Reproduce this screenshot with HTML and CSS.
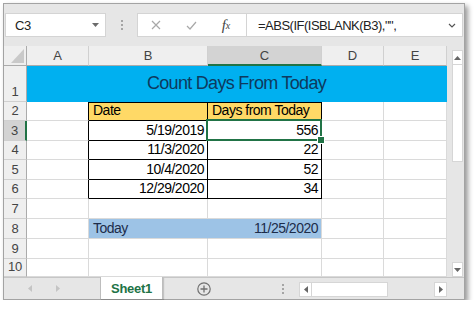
FILE: index.html
```html
<!DOCTYPE html>
<html lang="en">
<head>
    <meta charset="UTF-8">
    <meta name="viewport" content="width=device-width, initial-scale=1.0">
    <title>Count Days From Today</title>
    <link rel="stylesheet" href="styles.css">
</head>
<body>

<div class="window">

    <!-- Name box + formula bar -->
    <div class="formula-bar">
        <div class="name-box">
            <span>C3</span>
            <svg width="7" height="4" viewBox="0 0 7 4"><path d="M0 0h7L3.5 4z" fill="#6b6b6b"/></svg>
        </div>
        <div class="grip"><i></i><i></i><i></i></div>
        <div class="fx-box">
            <span class="btn">
                <svg width="10" height="10" viewBox="0 0 10 10"><path d="M1 1l8 8M9 1l-8 8" stroke="#a8a8a8" stroke-width="1.2" fill="none"/></svg>
            </span>
            <span class="btn">
                <svg width="11" height="9" viewBox="0 0 11 9"><path d="M1 5l3 3 6-7" stroke="#a8a8a8" stroke-width="1.2" fill="none"/></svg>
            </span>
            <span class="btn fx">f<sub>x</sub></span>
        </div>
        <div class="formula">
            <span>=ABS(IF(ISBLANK(B3),"",</span>
            <svg width="8" height="5" viewBox="0 0 8 5"><path d="M1 1l3 3 3-3" stroke="#555" stroke-width="1.2" fill="none"/></svg>
        </div>
    </div>

    <!-- Worksheet -->
    <div class="sheet">
        <div class="grid">
            <!-- column headers -->
            <div class="cell corner">
                <svg width="13" height="14" viewBox="0 0 13 14"><path d="M13 0v14H0z" fill="#c9c9c9"/></svg>
            </div>
            <div class="cell col">A</div>
            <div class="cell col">B</div>
            <div class="cell col sel">C</div>
            <div class="cell col">D</div>
            <div class="cell col">E</div>

            <!-- row 1 -->
            <div class="cell row">1</div>
            <div class="cell title">Count Days From Today</div>

            <!-- row 2 -->
            <div class="cell row">2</div>
            <div class="cell edge"></div>
            <div class="cell t hd">Date</div>
            <div class="cell t hd">Days from Today</div>
            <div class="cell"></div>
            <div class="cell"></div>

            <!-- row 3 -->
            <div class="cell row sel">3</div>
            <div class="cell edge"></div>
            <div class="cell t num">5/19/2019</div>
            <div class="cell t num active">556</div>
            <div class="cell"></div>
            <div class="cell"></div>

            <!-- row 4 -->
            <div class="cell row">4</div>
            <div class="cell edge"></div>
            <div class="cell t num">11/3/2020</div>
            <div class="cell t num">22</div>
            <div class="cell"></div>
            <div class="cell"></div>

            <!-- row 5 -->
            <div class="cell row">5</div>
            <div class="cell edge"></div>
            <div class="cell t num">10/4/2020</div>
            <div class="cell t num">52</div>
            <div class="cell"></div>
            <div class="cell"></div>

            <!-- row 6 -->
            <div class="cell row">6</div>
            <div class="cell edge"></div>
            <div class="cell t num">12/29/2020</div>
            <div class="cell t num">34</div>
            <div class="cell"></div>
            <div class="cell"></div>

            <!-- row 7 -->
            <div class="cell row">7</div>
            <div class="cell"></div>
            <div class="cell"></div>
            <div class="cell"></div>
            <div class="cell"></div>
            <div class="cell"></div>

            <!-- row 8 -->
            <div class="cell row">8</div>
            <div class="cell"></div>
            <div class="cell today">Today</div>
            <div class="cell today num">11/25/2020</div>
            <div class="cell"></div>
            <div class="cell"></div>

            <!-- row 9 -->
            <div class="cell row">9</div>
            <div class="cell"></div>
            <div class="cell"></div>
            <div class="cell"></div>
            <div class="cell"></div>
            <div class="cell"></div>

            <!-- row 10 -->
            <div class="cell row">10</div>
            <div class="cell"></div>
            <div class="cell"></div>
            <div class="cell"></div>
            <div class="cell"></div>
            <div class="cell"></div>
        </div>

        <div class="vscroll">
            <div class="arrow-box">
                <svg width="7" height="4" viewBox="0 0 7 4"><path d="M0 4h7L3.5 0z" fill="#666"/></svg>
            </div>
            <div class="thumb"></div>
            <div class="track"></div>
            <div class="arrow-box">
                <svg width="7" height="4" viewBox="0 0 7 4"><path d="M0 0h7L3.5 4z" fill="#666"/></svg>
            </div>
        </div>
    </div>

    <!-- Sheet tabs + horizontal scroll -->
    <div class="tabs">
        <div class="nav">
            <svg width="4" height="7" viewBox="0 0 4 7"><path d="M4 0v7L0 3.5z" fill="#c4c4c4"/></svg>
            <svg width="4" height="7" viewBox="0 0 4 7"><path d="M0 0v7l4-3.5z" fill="#c4c4c4"/></svg>
        </div>
        <div class="tab">Sheet1</div>
        <div class="add">
            <svg width="14" height="14" viewBox="0 0 14 14">
                <circle cx="7" cy="7" r="6.2" stroke="#707070" stroke-width="1.2" fill="none"/>
                <path d="M7 3.5v7M3.5 7h7" stroke="#707070" stroke-width="1.3"/>
            </svg>
        </div>
        <div class="grip small"><i></i><i></i><i></i></div>
        <div class="hscroll">
            <div class="arrow-box">
                <svg width="4" height="7" viewBox="0 0 4 7"><path d="M4 0v7L0 3.5z" fill="#666"/></svg>
            </div>
            <div class="hthumb"></div>
            <div class="track"></div>
            <div class="arrow-box">
                <svg width="4" height="7" viewBox="0 0 4 7"><path d="M0 0v7l4-3.5z" fill="#666"/></svg>
            </div>
        </div>
    </div>

</div>

</body>
</html>
```

FILE: styles.css
```css
/* General Reset */
* {
    margin: 0;
    padding: 0;
    box-sizing: border-box;
}

body {
    background: #fff;
    font-family: "Liberation Sans", Arial, sans-serif;
    color: #000;
}

/* Excel window frame */
.window {
    width: 462px;
    height: 297px;
    margin: 3px 0 0 3px;
    border: 1px solid #a3a3a3;
    background: #e6e6e6;
    box-shadow: 3px 3px 5px rgba(0, 0, 0, 0.4);
    display: flex;
    flex-direction: column;
}

/* Formula bar */
.formula-bar {
    height: 42px;
    display: flex;
    align-items: flex-start;
    padding: 9px 1px 0 1px;
}

.name-box {
    width: 101px;
    height: 24px;
    background: #fff;
    border: 1px solid #d4d4d4;
    display: flex;
    align-items: center;
    justify-content: space-between;
    padding: 0 6px 0 9px;
    font-size: 13px;
    letter-spacing: -0.3px;
    color: #222;
}

.grip {
    width: 31px;
    height: 24px;
    display: flex;
    flex-direction: column;
    align-items: center;
    justify-content: center;
    gap: 2px;
}

.grip i {
    width: 2px;
    height: 2px;
    background: #a5a5a5;
}

.fx-box {
    width: 110px;
    height: 24px;
    background: #fff;
    border: 1px solid #d4d4d4;
    display: flex;
    align-items: center;
    gap: 5px;
    padding-left: 3px;
}

.btn {
    width: 30px;
    display: flex;
    justify-content: center;
    align-items: center;
}

.fx {
    font-family: "Liberation Serif", serif;
    font-style: italic;
    font-size: 15px;
    color: #444;
}

.fx sub {
    font-size: 10px;
    vertical-align: 0;
}

.formula {
    flex: 1;
    height: 24px;
    background: #fff;
    border: 1px solid #d4d4d4;
    border-left: none;
    display: flex;
    align-items: center;
    justify-content: space-between;
    padding: 0 6px 0 11px;
    font-size: 13px;
    letter-spacing: -0.5px;
    color: #222;
}

/* Worksheet grid */
.sheet {
    display: flex;
    height: 231px;
}

.grid {
    display: grid;
    grid-template-columns: 23px 62px 119px 114px 62px 63px;
    grid-template-rows: 20px 36px 19px 20px 19px 20px 19px 20px 20px 20px 18px;
    background: #fff;
}

.cell {
    border-right: 1px solid #dadada;
    border-bottom: 1px solid #dadada;
    display: flex;
    align-items: flex-end;
    padding: 0 3px 1px 4px;
    font-size: 14px;
    letter-spacing: -0.5px;
    line-height: 17px;
    white-space: nowrap;
}

.corner {
    background: #efefef;
    border-right-color: #ababab;
    border-bottom-color: #ababab;
    justify-content: flex-end;
    padding: 0 2px 2px 0;
}

.col {
    background: #efefef;
    border-right-color: #d0d0d0;
    border-bottom-color: #ababab;
    justify-content: center;
    align-items: center;
    padding: 0;
    font-size: 13px;
    letter-spacing: 0;
    color: #444;
}

.col.sel {
    background: #d3d3d3;
    border-bottom: 2px solid #217346;
}

.row {
    background: #efefef;
    border-right-color: #ababab;
    border-bottom-color: #d0d0d0;
    justify-content: center;
    padding: 0 0 1px 0;
    font-size: 13px;
    letter-spacing: -0.3px;
    color: #444;
}

.row.sel {
    background: #d3d3d3;
    border-right: 2px solid #217346;
}

.title {
    grid-column: span 5;
    background: #00b0f0;
    border-right-color: #00b0f0;
    border-bottom-color: #00b0f0;
    justify-content: center;
    align-items: center;
    padding: 0;
    font-size: 18px;
    letter-spacing: -0.7px;
    color: #0e3a5e;
}

/* Data table */
.edge {
    border-right-color: #000;
}

.t {
    border-right-color: #000;
    border-bottom-color: #000;
}

.hd {
    background: #ffd966;
    box-shadow: inset 0 1px 0 #000;
}

.num {
    justify-content: flex-end;
}

.today {
    background: #9dc3e6;
    border-right-color: #9dc3e6;
    color: #1c2c4a;
}

.today.num {
    border-right-color: #dadada;
}

/* Active cell outline + fill handle */
.active {
    position: relative;
}

.active::after {
    content: "";
    position: absolute;
    left: -2px;
    top: -2px;
    right: -1px;
    bottom: -1px;
    border: 2px solid #217346;
}

.active::before {
    content: "";
    position: absolute;
    right: -4px;
    bottom: -4px;
    width: 6px;
    height: 6px;
    background: #217346;
    border: 1px solid #fff;
    z-index: 1;
}

/* Scroll bars */
.vscroll {
    width: 17px;
    display: flex;
    flex-direction: column;
    padding: 4px 1px 0 5px;
}

.arrow-box {
    background: #fff;
    border: 1px solid #d6d6d6;
    display: flex;
    justify-content: center;
    align-items: center;
}

.vscroll .arrow-box {
    height: 15px;
}

.thumb {
    height: 97px;
    background: #fff;
    border: 1px solid #d6d6d6;
    border-top: none;
}

.track {
    flex: 1;
}

/* Sheet tabs */
.tabs {
    height: 22px;
    display: flex;
    border-top: 1px solid #c6c6c6;
}

.nav {
    width: 96px;
    display: flex;
    align-items: center;
    gap: 24px;
    padding-left: 24px;
}

.tab {
    width: 63px;
    height: 22px;
    margin-top: -1px;
    background: #fff;
    border-left: 1px solid #bdbdbd;
    border-right: 1px solid #bdbdbd;
    box-shadow: 1px 1px 1px rgba(0, 0, 0, 0.15);
    display: flex;
    justify-content: center;
    align-items: center;
    font-size: 13px;
    letter-spacing: -0.3px;
    font-weight: bold;
    color: #217346;
}

.add {
    width: 82px;
    display: flex;
    align-items: center;
    padding-left: 34px;
}

.grip.small {
    width: 54px;
    height: 21px;
    align-items: flex-end;
    padding-right: 15px;
}

.hscroll {
    width: 148px;
    height: 15px;
    margin-top: 4px;
    display: flex;
}

.hscroll .arrow-box {
    width: 13px;
}

.hthumb {
    width: 76px;
    background: #fff;
    border: 1px solid #d6d6d6;
    border-left: none;
}
```
